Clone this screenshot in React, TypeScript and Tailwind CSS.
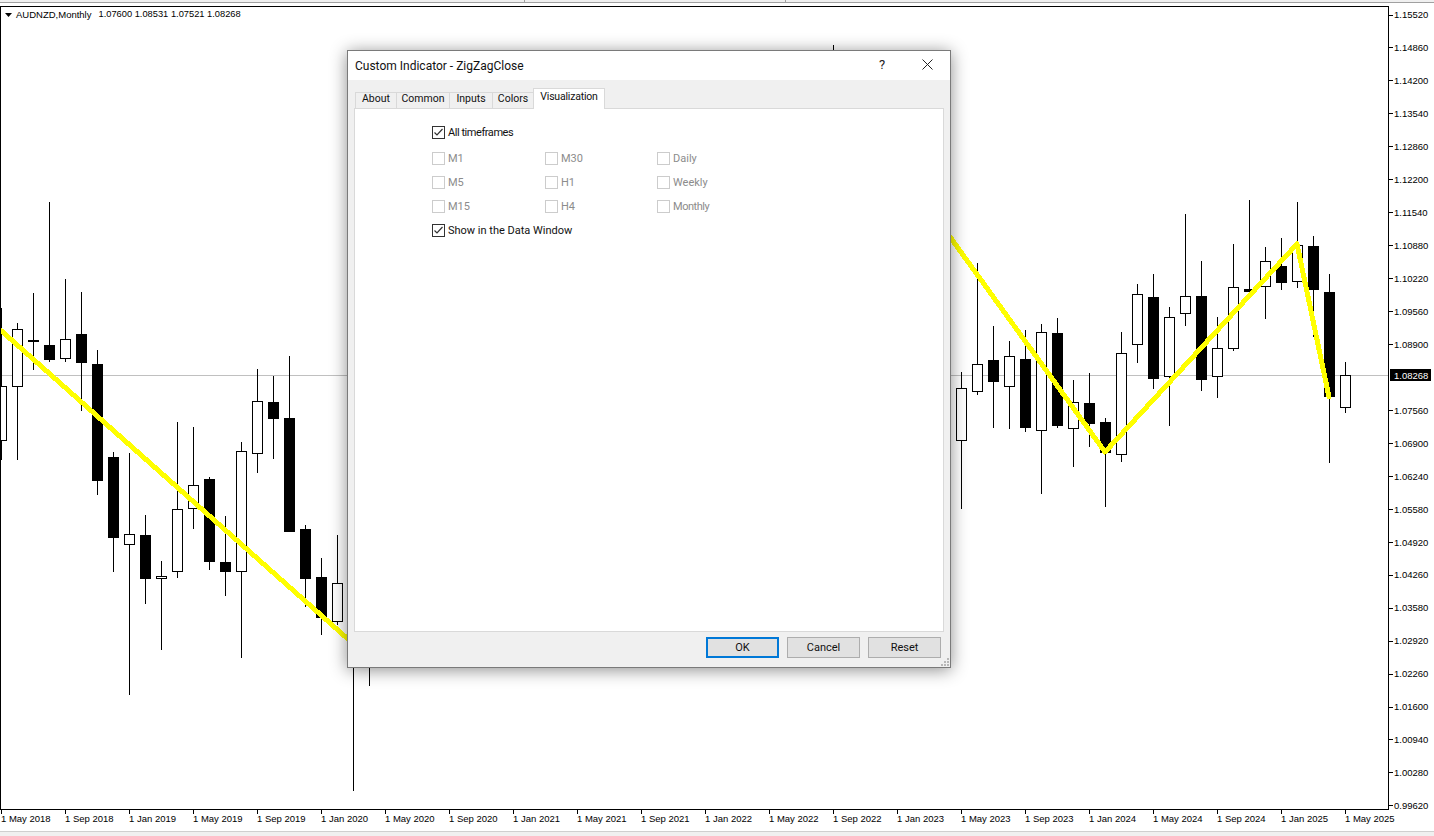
import React from "react";

type C = [number, 0 | 1, number, number, number, number];
// [center x, bullish?, body top, body bottom, wick top, wick bottom]
const candles: C[] = [
  [1, 1, 386, 441, 308, 460],
  [17, 1, 329, 387, 323, 460],
  [33, 0, 340, 342, 293, 370],
  [49, 0, 345, 360, 202, 362],
  [65, 1, 339, 359, 279, 362],
  [81, 0, 334, 363, 292, 411],
  [97, 0, 364, 481, 350, 495],
  [113, 0, 457, 538, 452, 572],
  [129, 1, 534, 545, 453, 695],
  [145, 0, 535, 579, 515, 604],
  [161, 1, 576, 579, 561, 650],
  [177, 1, 509, 572, 422, 578],
  [193, 1, 485, 509, 427, 529],
  [209, 0, 479, 562, 477, 570],
  [225, 0, 562, 572, 516, 596],
  [241, 1, 451, 572, 442, 658],
  [257, 1, 401, 454, 369, 473],
  [273, 0, 402, 419, 376, 459],
  [289, 0, 418, 532, 356, 532],
  [305, 0, 529, 579, 525, 607],
  [321, 0, 577, 618, 558, 635],
  [337, 1, 583, 622, 535, 625],
  [353, 0, 600, 640, 560, 791],
  [369, 0, 600, 640, 560, 686],
  [833, 0, 60, 90, 45, 100],
  [961, 1, 388, 441, 372, 509],
  [977, 1, 364, 392, 263, 395],
  [993, 0, 360, 382, 326, 428],
  [1009, 1, 356, 387, 341, 429],
  [1025, 0, 359, 428, 330, 432],
  [1041, 1, 332, 431, 324, 494],
  [1057, 0, 333, 426, 318, 428],
  [1073, 1, 402, 429, 380, 467],
  [1089, 0, 403, 424, 373, 447],
  [1105, 0, 422, 453, 418, 507],
  [1121, 1, 353, 455, 332, 462],
  [1137, 1, 294, 345, 284, 363],
  [1153, 0, 297, 379, 274, 389],
  [1169, 1, 317, 377, 307, 426],
  [1185, 1, 296, 314, 214, 326],
  [1201, 0, 296, 380, 261, 391],
  [1217, 1, 348, 377, 317, 398],
  [1233, 1, 287, 349, 244, 351],
  [1249, 0, 289, 292, 200, 293],
  [1265, 1, 261, 287, 247, 319],
  [1281, 0, 266, 283, 238, 290],
  [1297, 1, 245, 282, 202, 288],
  [1313, 0, 246, 290, 236, 337],
  [1329, 0, 292, 397, 274, 463],
  [1345, 1, 375, 408, 362, 413],
];

const prices = [
  "1.15520", "1.14860", "1.14200", "1.13540", "1.12860", "1.12200", "1.11540", "1.10880", "1.10220", "1.09560", "1.08900",
  "1.08268",
  "1.07560", "1.06900", "1.06240", "1.05580", "1.04920", "1.04260", "1.03580", "1.02920", "1.02260", "1.01600", "1.00940", "1.00280", "0.99620",
];

const dates = [
  "1 May 2018", "1 Sep 2018", "1 Jan 2019", "1 May 2019", "1 Sep 2019", "1 Jan 2020", "1 May 2020", "1 Sep 2020",
  "1 Jan 2021", "1 May 2021", "1 Sep 2021", "1 Jan 2022", "1 May 2022", "1 Sep 2022", "1 Jan 2023", "1 May 2023",
  "1 Sep 2023", "1 Jan 2024", "1 May 2024", "1 Sep 2024", "1 Jan 2025", "1 May 2025",
];

function Check({ label, checked, disabled, tight }: { label: string; checked?: boolean; disabled?: boolean; tight?: boolean }) {
  return (
    <div className="flex items-center h-[13px]">
      <span className={`flex items-center justify-center w-[13px] h-[13px] bg-white border ${disabled ? "border-[#cccccc]" : "border-[#333333]"}`}>
        {checked && (
          <svg width="11" height="11" viewBox="0 0 11 11" fill="none">
            <path d="M1.5 5.5 L4 8 L9.5 2" stroke="#333333" strokeWidth="1.2" />
          </svg>
        )}
      </span>
      <span className={`ml-[3px] ${tight ? "tracking-[-0.45px]" : ""} ${disabled ? "text-[#8c8c8c]" : "text-[#111111]"}`}>{label}</span>
    </div>
  );
}

const tabs: [string, string][] = [
  ["About", "w-[41px]"],
  ["Common", "w-[53px]"],
  ["Inputs", "w-[43px]"],
  ["Colors", "w-[41px]"],
];

function Dialog() {
  return (
    <div className="absolute left-[347px] top-[50px] w-[604px] h-[618px] flex flex-col bg-[#f0f0f0] border border-[#7a7a7a] shadow-[0_2px_16px_rgba(0,0,0,0.45)] font-['Roboto',sans-serif] text-[11px] leading-none text-[#111111]">
      <div className="h-[29px] bg-white flex items-center pl-[7px] shrink-0 relative">
        <span className="text-[12px]">Custom Indicator - ZigZagClose</span>
        <span className="absolute left-[531px] top-[7px] text-[13px] text-[#222222]">?</span>
        <svg className="absolute left-[574px] top-[8px]" width="11" height="11" viewBox="0 0 11 11" fill="none">
          <path d="M0.5 0.5 L10.5 10.5 M10.5 0.5 L0.5 10.5" stroke="#222222" strokeWidth="1" />
        </svg>
      </div>
      <div className="flex-1 flex flex-col px-[6px] pt-[8px] min-h-0">
        <div className="flex items-end h-[20px] pl-px relative z-10 shrink-0 text-[10.5px]">
          {tabs.map(([t, w]) => (
            <div key={t} className={`${w} h-[16px] flex items-center justify-center pb-[3px] border-l border-t border-[#d9d9d9] bg-[#f0f0f0]`}>
              {t}
            </div>
          ))}
          <div className="w-[72px] h-[21px] -mb-px flex items-start justify-center pt-[3px] bg-white border-l border-t border-r border-[#d9d9d9] tracking-[-0.2px]">
            Visualization
          </div>
        </div>
        <div className="h-[524px] bg-white border border-[#d9d9d9] shrink-0 pl-[77px] pt-[17px]">
          <div className="flex flex-col gap-[11px]">
            <div className="mb-[2px]">
              <Check label="All timeframes" checked tight />
            </div>
            <div className="grid grid-cols-[113px_112px_100px] gap-y-[11px]">
              <Check label="M1" disabled />
              <Check label="M30" disabled />
              <Check label="Daily" disabled />
              <Check label="M5" disabled />
              <Check label="H1" disabled />
              <Check label="Weekly" disabled />
              <Check label="M15" disabled />
              <Check label="H4" disabled />
              <Check label="Monthly" disabled tight />
            </div>
            <Check label="Show in the Data Window" checked />
          </div>
        </div>
        <div className="flex justify-end gap-2 pr-[3px] mt-[5px]">
          <button className="w-[73px] h-[21px] bg-[#e1e1e1] border-2 border-[#0078d7]">OK</button>
          <button className="w-[73px] h-[21px] bg-[#e1e1e1] border border-[#adadad]">Cancel</button>
          <button className="w-[73px] h-[21px] bg-[#e1e1e1] border border-[#adadad]">Reset</button>
        </div>
      </div>
      <svg className="absolute right-0 bottom-0" width="11" height="11" viewBox="0 0 11 11" fill="#b8b8b8">
        <rect x="8" y="2" width="2" height="2" />
        <rect x="5" y="5" width="2" height="2" />
        <rect x="8" y="5" width="2" height="2" />
        <rect x="2" y="8" width="2" height="2" />
        <rect x="5" y="8" width="2" height="2" />
        <rect x="8" y="8" width="2" height="2" />
      </svg>
    </div>
  );
}

export default function App() {
  return (
    <div className="relative w-[1434px] h-[836px] overflow-hidden bg-white flex flex-col font-['Liberation_Sans',sans-serif] text-[9.5px] leading-none text-black">
      {/* top strip of the parent window */}
      <div className="h-[6px] shrink-0 flex">
        <div className="w-[525px] h-[3px] bg-[#f0f0f0] border-b border-r border-[#a0a0a0]" />
        <div className="w-[261px] h-[3px] bg-[#f0f0f0] border-b border-r border-[#a0a0a0]" />
        <div className="flex-1 h-[3px] bg-[#f0f0f0] border-b border-[#a0a0a0]" />
      </div>

      <div className="flex flex-1 min-h-0">
        <div className="w-[1389px] flex flex-col shrink-0">
          <div className="relative w-[1389px] h-[804px] border border-black shrink-0">
            <svg className="block" width="1387" height="802" viewBox="1 7 1387 802" shapeRendering="crispEdges">
              <rect x="1" y="375" width="1387" height="1" fill="#c0c0c0" />
              {candles.map(([c, bull, top, bot, wt, wb]) => (
                <g key={c}>
                  <rect x={c} y={wt} width="1" height={wb - wt} fill="#000" />
                  <rect x={c - 5} y={top} width="11" height={bot - top} fill="#000" />
                  {bull === 1 && <rect x={c - 4} y={top + 1} width="9" height={bot - top - 2} fill="#fff" />}
                </g>
              ))}
              <polyline points="-3,327 358,648" fill="none" stroke="#ffff00" strokeWidth="5" />
              <polyline
                points="940,223 1105,452 1297,244 1329,397"
                fill="none"
                stroke="#ffff00"
                strokeWidth="5"
                strokeLinejoin="round"
                strokeLinecap="round"
              />
            </svg>
            <div className="absolute left-[4px] top-[2px] flex items-center h-[11px] whitespace-pre">
              <svg width="7" height="4" viewBox="0 0 7 4" className="mr-[4px]">
                <path d="M0 0 H7 L3.5 4 Z" fill="#000" />
              </svg>
              <span>AUDNZD,Monthly</span>
              <span className="ml-[7px] text-[9.3px]">1.07600 1.08531 1.07521 1.08268</span>
            </div>
          </div>
          <div className="h-[21px] flex pl-px shrink-0">
            {dates.map((d) => (
              <div key={d} className="w-16 shrink-0 flex flex-col">
                <span className="w-px h-[4px] bg-black" />
                <span className="whitespace-nowrap leading-[9px]">{d}</span>
              </div>
            ))}
          </div>
        </div>

        <div className="flex-1 flex flex-col justify-between pt-[3.5px] pb-[19.5px]">
          {prices.map((p) =>
            p === "1.08268" ? (
              <div key={p} className="flex items-center h-[11px]">
                <span className="ml-px mb-[4px] w-[41px] h-[12px] bg-black text-white flex items-center pl-[4px]">{p}</span>
              </div>
            ) : (
              <div key={p} className="flex items-center h-[11px]">
                <span className="w-[4px] h-px bg-black" />
                <span className="ml-px">{p}</span>
              </div>
            )
          )}
        </div>
      </div>

      <div className="h-[5px] shrink-0 bg-[#f0f0f0] border-t border-[#cfcfcf]" />
      <Dialog />
    </div>
  );
}
